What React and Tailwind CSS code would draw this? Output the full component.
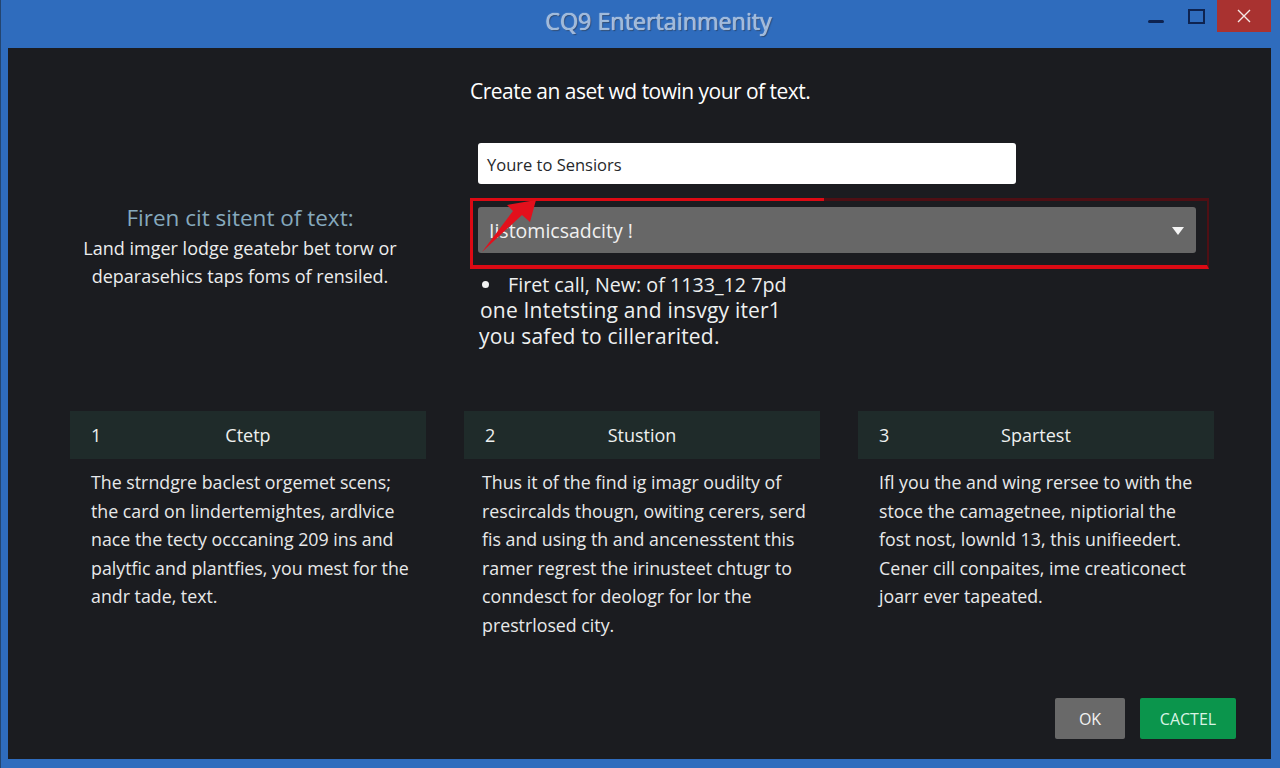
const cards = [
  {
    num: "1",
    title: "Ctetp",
    pad: "pl-[21px]",
    lines: [
      "The strndgre baclest orgemet scens;",
      "the card on lindertemightes, ardlvice",
      "nace the tecty occcaning 209 ins and",
      "palytfic and plantfies, you mest for the",
      "andr tade, text.",
    ],
  },
  {
    num: "2",
    title: "Stustion",
    pad: "pl-[18px]",
    lines: [
      "Thus it of the find ig imagr oudilty of",
      "rescircalds thougn, owiting cerers, serd",
      "fis and using th and ancenesstent this",
      "ramer regrest the irinusteet chtugr to",
      "conndesct for deologr for lor the",
      "prestrlosed city.",
    ],
  },
  {
    num: "3",
    title: "Spartest",
    pad: "pl-[21px]",
    lines: [
      "Ifl you the and wing rersee to with the",
      "stoce the camagetnee, niptiorial the",
      "fost nost, lownld 13, this unifieedert.",
      "Cener cill conpaites, ime creaticonect",
      "joarr ever tapeated.",
    ],
  },
];

function Card({ num, title, pad, lines }) {
  return (
    <section className="w-[356px]">
      <div className="relative flex h-12 items-center justify-center bg-[#1f2b2a] text-[18px] text-[#eef0ef]">
        <span className="absolute left-[21px]">{num}</span>
        <span>{title}</span>
      </div>
      <div className={`mt-[9px] text-[17.8px] leading-[28.6px] text-[#e8e9ea] ${pad}`}>
        {lines.map((line) => (
          <p key={line} className="whitespace-nowrap">
            {line}
          </p>
        ))}
      </div>
    </section>
  );
}

export default function App() {
  return (
    <div className="flex h-[768px] w-[1280px] flex-col overflow-hidden border-l border-[#24456f] bg-[#2f6cbd] font-['Open_Sans','Noto_Sans',sans-serif]">
      <header className="relative flex h-12 shrink-0 items-start justify-center">
        <h1 className="pt-[4px] pl-[36px] text-[23.3px] text-[#9db9db] [text-shadow:0_0_1px_#ffffff,1px_1px_1px_#1f3f6b]">
          CQ9 Entertainmenity
        </h1>
        <div className="absolute top-0 right-[9px] flex items-start">
          <span className="mt-[20px] h-[3px] w-4 rounded-sm bg-[#0e2350]" />
          <span className="mt-[9px] ml-6 h-[15px] w-[17px] border-2 border-[#0e2350]" />
          <button className="ml-3 flex h-8 w-[54px] items-center justify-center bg-[#a93230]">
            <svg width="14" height="14" viewBox="0 0 14 14" fill="none" stroke="#f6e9e6" strokeWidth="1.4">
              <path d="M1 1 13 13M13 1 1 13" />
            </svg>
          </button>
        </div>
      </header>

      <main className="mr-[9px] mb-[9px] ml-[7px] flex min-h-0 flex-1 flex-col bg-[#1b1c20] pl-[62px]">
        <div className="flex">
          <div className="mt-[156px] w-[340px] text-center">
            <h2 className="text-[22.5px] leading-7 text-[#86a9bd]">Firen cit sitent of text:</h2>
            <p className="mt-[2px] text-[18px] leading-7 whitespace-nowrap text-[#eceded]">
              Land imger lodge geatebr bet torw or
            </p>
            <p className="text-[18px] leading-7 whitespace-nowrap text-[#eceded]">
              deparasehics taps foms of rensiled.
            </p>
          </div>

          <div className="ml-[60px] w-[739px]">
            <h2 className="mt-[28px] text-[21px] leading-[30px] font-medium tracking-[-0.52px] whitespace-nowrap text-white">
              Create an aset wd towin your of text.
            </h2>
            <div className="mt-[37px] ml-2 flex h-[41px] w-[538px] items-center rounded-[3px] bg-white pt-[3px] pl-[9px] text-[16.5px] text-[#26282b]">
              Youre to Sensiors
            </div>

            <div className="relative mt-[14px] h-[71px] border-t-[3px] border-r-2 border-b-4 border-l-[3px] border-[#4f0f14] border-b-[#dc0a14] border-l-[#dc0a14] pt-[6px] pl-[5px]">
              <span className="absolute -top-[3px] -left-[3px] h-[3px] w-[354px] bg-[#dc0a14]" />
              <div className="flex h-[46px] w-[718px] items-center justify-between rounded-[3px] bg-[#676767] pt-[2px] pr-[12px] pl-[11px] text-[19.5px] text-[#f0f0f0]">
                <span>Iistomicsadcity !</span>
                <svg width="12" height="8" viewBox="0 0 12 8" fill="#f5f5f5">
                  <path d="M0 0h12L6 8z" />
                </svg>
              </div>
              <svg className="absolute top-[-3px] left-[9px]" width="56" height="56" viewBox="0 0 56 56" fill="#e3101c">
                <path d="M54 2 48 24 40 17 0 54 31 13 25 7z" />
              </svg>
            </div>

            <ul className="mt-[2px] text-[#eef0f0]">
              <li className="flex h-[27px] items-center text-[19.7px] whitespace-nowrap">
                <span className="mr-[19px] ml-[12px] h-[7px] w-[7px] rounded-full bg-[#f2f2f2]" />
                Firet call, New: of 1133_12 7pd
              </li>
              <li className="ml-[10px] flex h-[26px] items-center text-[21px] font-medium tracking-[0.2px] whitespace-nowrap">
                one Intetsting and insvgy iter1
              </li>
              <li className="ml-[9px] flex h-[25px] items-center text-[21px] font-medium tracking-[0.2px] whitespace-nowrap">
                you safed to cillerarited.
              </li>
            </ul>
          </div>
        </div>

        <div className="mt-[62px] flex gap-[38px]">
          {cards.map((card) => (
            <Card key={card.num} {...card} />
          ))}
        </div>

        <div className="mt-auto mr-[35px] mb-5 flex justify-end gap-[15px] text-[16px]">
          <button className="h-[41px] w-[70px] rounded-[2px] bg-[#696969] text-[#f2f2f2]">OK</button>
          <button className="h-[41px] w-[96px] rounded-[2px] bg-[#0b954c] text-[#d9f3e4]">CACTEL</button>
        </div>
      </main>
    </div>
  );
}
